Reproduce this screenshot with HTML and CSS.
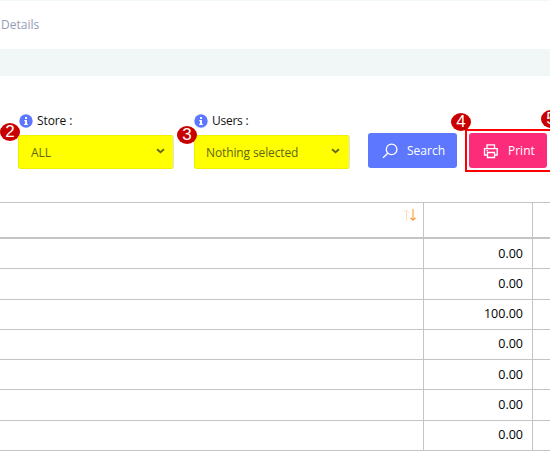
FILE: index.html
```html
<!DOCTYPE html>
<html lang="en">
<head>
<meta charset="utf-8">
<title>Details</title>
<link rel="stylesheet" href="styles.css">
</head>
<body>
<header class="crumbs">Details</header>
<main class="panel">
  <form class="filters">
    <div class="field">
      <label class="label"><svg class="info" viewBox="0 0 14 14"><circle cx="7" cy="7" r="6.7" fill="#5d78ff"/><path d="M6 3h2v2H6zM5.3 6H8v3.7h.8V11H5.2V9.7H6V7.2h-.7z" fill="#fff"/></svg><span>Store :</span></label>
      <div class="select"><span>ALL</span><svg class="chevron" viewBox="0 0 9 6"><path d="M1 1.2l3.5 3 3.5-3"/></svg></div>
      <b class="badge badge-2">2</b>
    </div>
    <div class="field users">
      <label class="label"><svg class="info" viewBox="0 0 14 14"><circle cx="7" cy="7" r="6.7" fill="#5d78ff"/><path d="M6 3h2v2H6zM5.3 6H8v3.7h.8V11H5.2V9.7H6V7.2h-.7z" fill="#fff"/></svg><span>Users :</span></label>
      <div class="select"><span>Nothing selected</span><svg class="chevron" viewBox="0 0 9 6"><path d="M1 1.2l3.5 3 3.5-3"/></svg></div>
      <b class="badge badge-3">3</b>
    </div>
    <div class="btn search"><svg viewBox="0 0 16 16"><circle cx="9.6" cy="6.4" r="5.3"/><path d="M5.8 10.2L1 14.8"/></svg><span>Search</span></div>
    <div class="btn print"><svg viewBox="0 0 16 16"><path d="M4 5.500V1.800h7.500V5.500M4 12H1.500V5.700h12.700V12h-2.500M4.500 9.500h7v5h-7zM3.500 7.700h1.500"/></svg><span>Print</span></div>
    <div class="outline"></div>
    <b class="badge badge-4">4</b>
    <b class="badge badge-5">5</b>
  </form>
  <div class="table">
    <div class="row head"><div class="cell"><svg class="sort" viewBox="0 0 12 14"><path d="M2.500 13V2M0 4.500L2.500 2 5 4.500" stroke="#ffdfbd"/><path d="M9 1v11" stroke="#ffb95c" stroke-width="1.500"/><path d="M6.500 9.700L9 12.200 11.500 9.700" stroke="#f79a3e" stroke-width="1.300"/></svg></div><div class="cell"></div><div class="cell"></div></div>
    <div class="row"><div class="cell"></div><div class="cell">0.00</div><div class="cell"></div></div>
    <div class="row tall"><div class="cell"></div><div class="cell">0.00</div><div class="cell"></div></div>
    <div class="row raised"><div class="cell"></div><div class="cell">100.00</div><div class="cell"></div></div>
    <div class="row raised"><div class="cell"></div><div class="cell">0.00</div><div class="cell"></div></div>
    <div class="row"><div class="cell"></div><div class="cell">0.00</div><div class="cell"></div></div>
    <div class="row tall"><div class="cell"></div><div class="cell">0.00</div><div class="cell"></div></div>
    <div class="row raised"><div class="cell"></div><div class="cell">0.00</div><div class="cell"></div></div>
  </div>
</main>
</body>
</html>
```
FILE: styles.css
```css
* { box-sizing: border-box; }
body { margin: 0; width: 550px; height: 474px; overflow: hidden; background: #fff; font: 12px/18px "Open Sans", "Noto Sans", sans-serif; color: #111; }
svg { display: block; fill: none; flex: none; }
.crumbs { height: 49px; border-top: 1px solid #f2f7f8; padding: 15px 0 0 1px; color: #959cb6; }
.panel { border-top: 27px solid #f1f7f7; padding-top: 36px; }
.filters { position: relative; display: flex; height: 90px; padding-left: 18px; }
.field { position: relative; width: 156px; margin-right: 20px; }
.field.users { margin-right: 18px; }
.label { display: flex; align-items: center; height: 18px; gap: 4px; padding-left: 1px; letter-spacing: -.1px; }
.users .label { padding-left: 0; letter-spacing: -.25px; }
.info { width: 14px; height: 14px; }
.select { display: flex; align-items: center; justify-content: space-between; height: 34px; margin-top: 5px; padding: 2px 8px 0 12px; border: 1px solid #eff000; border-right: 1px solid #dfe1f3; border-radius: 3px; background: #ff0; color: #62651a; }
.users .select { padding-left: 11px; padding-right: 9px; letter-spacing: -.12px; }
.chevron { width: 9px; height: 6px; margin-bottom: 4px; stroke: #65671a; stroke-width: 1.8; }
.btn { display: flex; align-items: center; height: 35px; margin-top: 21px; border-radius: 3px; color: #fff; }
.btn svg { width: 16px; height: 16px; stroke: #fff; stroke-width: 1.3; }
.search { width: 89px; padding-left: 14px; gap: 9px; background: #5d78ff; }
.print { width: 78px; margin-left: 12px; padding-left: 14px; gap: 9px; background: #fd2c7a; }
.outline { position: absolute; left: 465px; top: 17px; width: 90px; height: 43px; border: 2px solid #f00; }
.badge { position: absolute; width: 20px; height: 18px; border-radius: 50%; background: #c80000; color: #fff; font: 17px/18px "Liberation Sans", sans-serif; text-align: center; }
.badge-2 { left: -18px; top: 11px; }
.badge-3 { left: -17px; top: 14px; }
.badge-4 { left: 451px; top: 1px; }
.badge-5 { left: 541px; top: -2px; }
.table { border-top: 1px solid #c4c4c4; }
.row { display: grid; grid-template-columns: 424px 109px 1fr; height: 30px; border-bottom: 1px solid #c4c4c4; }
.tall { height: 31px; }
.head { height: 36px; border-bottom-width: 2px; }
.cell { padding: 6px 9px 0 0; border-right: 1px solid #c4c4c4; text-align: right; color: #000; font-size: 12.5px; }
.head .cell { padding-top: 5px; }
.raised .cell { padding-top: 5px; }
.cell:last-child { border-right: 0; }
.sort { width: 12px; height: 14px; margin-left: auto; margin-right: -2px; }
```
